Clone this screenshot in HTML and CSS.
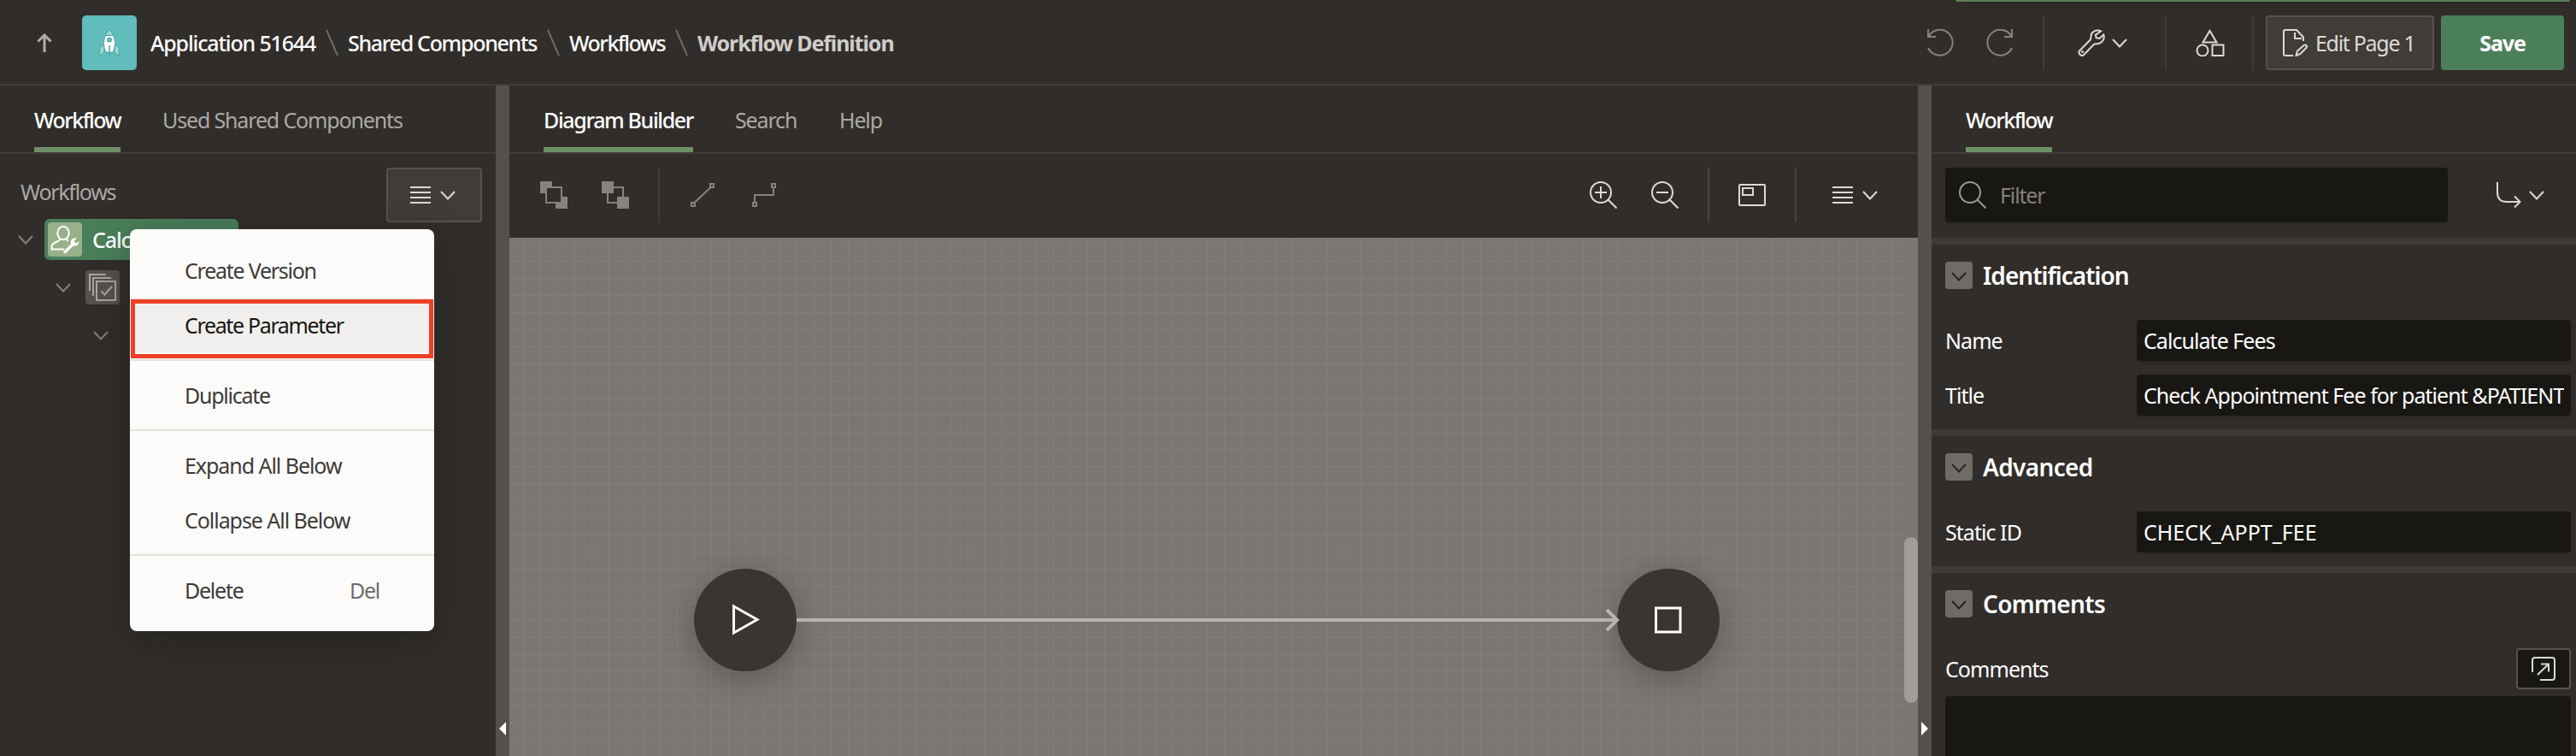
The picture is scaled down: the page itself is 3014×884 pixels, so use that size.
FILE: index.html
```
<!DOCTYPE html>
<html lang="en">
<head>
<meta charset="utf-8">
<title>Workflow Definition</title>
<link rel="stylesheet" href="styles.css">
</head>
<body>
<svg width="0" height="0" class="defs">
  <symbol id="chev" viewBox="0 0 18 11"><path d="M1 1l8 8.500l8-8.500" fill="none" stroke="currentColor" stroke-width="2"/></symbol>
  <symbol id="lines" viewBox="0 0 24 20"><path d="M0 1h24M0 7h24M0 13h24M0 19h24" stroke="currentColor" stroke-width="2"/></symbol>
</svg>
<div class="app">
  <header class="topbar">
    <svg class="up" width="18" height="22" viewBox="0 0 18 22"><path d="M9 22V2M1.500 9.500L9 2l7.500 7.500" fill="none" stroke="currentColor" stroke-width="3"/></svg>
    <span class="applogo"><svg width="24" height="32" viewBox="0 0 24 32"><path d="M5.500 18L.7 22.500v9L6 27zM18.500 18l4.800 4.500v9L18 27z" fill="#9fd6d3" stroke="#4aa3a4"/><path d="M7.500 7.500h9c2 5 3.200 12-.5 19.500H8c-3.700-7.500-2.500-14.500-.5-19.500z" fill="#fff" stroke="#4aa3a4" stroke-width=".8"/><path d="M12 .7c2.300 2 3.800 4.300 4.500 6.800h-9C8.200 5 9.700 2.700 12 .7z" fill="#9fd6d3" stroke="#4aa3a4"/><circle cx="12" cy="12.500" r="2.200" fill="#8fcfcd" stroke="#3f9597" stroke-width="1.300"/><path d="M12 19v12" stroke="#4aa3a4" stroke-width="1.500"/></svg></span>
    <nav class="crumbs">
      <a class="c1">Application 51644</a><svg class="slash" width="15" height="32"><path d="M1 1l13 30"/></svg>
      <a class="c2">Shared Components</a><svg class="slash" width="15" height="32"><path d="M1 1l13 30"/></svg>
      <a class="c3">Workflows</a><svg class="slash" width="15" height="32"><path d="M1 1l13 30"/></svg>
      <b class="c4">Workflow Definition</b>
    </nav>
    <div class="actions">
      <svg class="dim undo" width="32" height="32" viewBox="0 0 32 32"><path d="M2 0v9h9M2.500 8.500A15 15 0 1 1 2 22" /></svg>
      <svg class="dim redo" width="32" height="32" viewBox="0 0 32 32"><path d="M30 0v9h-9M29.500 8.500A15 15 0 1 0 30 22" /></svg>
      <i class="vr v1"></i>
      <svg class="lite" width="32" height="32" viewBox="0 0 32 32"><path d="M27 2.500C22 0 16 3 15.500 8c-.2 2 .2 3.500-1.200 5L2.500 25c-3 3 1.500 8 4.700 5L18.500 18.300c1.500-1.300 3-.8 5-1.100c5-.7 8.500-5.500 6.800-10.700L25.500 11l-3.800-.8L20.800 7z"/><circle cx="5.500" cy="26.500" r=".6"/></svg>
      <svg class="lite ch" width="18" height="11"><use href="#chev"/></svg>
      <i class="vr v2"></i>
      <svg class="lite" width="34" height="32" viewBox="0 0 34 32"><path d="M16.500 2l8 13.500h-16z"/><circle cx="8" cy="25" r="6.500"/><path d="M19.500 18.500h13v12.500h-13z"/></svg>
      <i class="vr v3"></i>
      <button class="btn edit"><svg class="lite" width="30" height="32" viewBox="0 0 30 32"><path d="M12 31H3q-2 0-2-2V3q0-2 2-2h13l8 8.500v4.500M14 4v7h8"/><path d="M15.500 31l1.500-5.500l7.500-6.500c2-1.500 4.500 .8 3 2.800l-7 7.200z"/></svg><span>Edit Page 1</span></button>
      <button class="btn save">Save</button>
    </div>
    <i class="notice"></i>
  </header>
  <main class="panes">
    <section class="left">
      <div class="tabs"><a class="on w">Workflow</a><a class="usc">Used Shared Components</a></div>
      <div class="treehead"><span>Workflows</span><button class="btn menu-b"><svg class="lite" width="24" height="20"><use href="#lines"/></svg><svg class="lite" width="18" height="11"><use href="#chev"/></svg></button></div>
      <ul class="tree">
        <li class="r1"><svg class="tc" width="18" height="11"><use href="#chev"/></svg><span class="node"><i class="ic"><svg width="40" height="40" viewBox="0 0 40 40"><ellipse cx="18" cy="12.500" rx="6.700" ry="7.700"/><path d="M14 19.500c-.5 4.500-9.500 2.500-9.500 9v3H19M22 19.500l1.500 2.500"/><path d="M20 34.500L30 25" stroke-width="3.500" stroke-linecap="round"/><path d="M33.500 18.500c-4-1-8 2.500-6.500 7c1.500 3.500 9 3 9.500-3l-3.500 2l-2.500-2z" fill="#fff" stroke="none"/></svg></i>Calculate Fees</span></li>
        <li class="r2"><svg class="tc" width="18" height="11"><use href="#chev"/></svg><i class="ic g"><svg width="40" height="40" viewBox="0 0 40 40"><path d="M13 13h22v22H13zM18.500 24.500l4 4L31 19M9 30V9h21M5 24V5h19"/></svg></i></li>
        <li class="r3"><svg class="tc" width="18" height="11"><use href="#chev"/></svg></li>
      </ul>
      <div class="popup">
        <a>Create Version</a><a class="hot">Create Parameter</a><hr><a>Duplicate</a><hr><a class="wide">Expand All Below</a><a class="wide">Collapse All Below</a><hr><a>Delete<kbd>Del</kbd></a>
        <i class="mark"></i>
      </div>
    </section>
    <div class="split s1"><svg width="8" height="16"><path d="M8 0v16L0 8z" fill="#fff"/></svg></div>
    <section class="center">
      <div class="tabs"><a class="on db">Diagram Builder</a><a class="se">Search</a><a class="he">Help</a></div>
      <div class="toolbar">
        <svg class="t1" width="32" height="32"><path d="M0 0h14v14H0zM18 18h14v14H18z" fill="#858280"/><path d="M7 7h18v18H7z" fill="#312d2a" stroke="#858280" stroke-width="2"/></svg>
        <svg class="t2" width="32" height="32"><path d="M7 7h18v18H7z" fill="none" stroke="#858280" stroke-width="2"/><path d="M0 0h14v14H0zM18 18h14v14H18z" fill="#858280"/></svg>
        <i class="vr f1"></i>
        <svg class="dim t3" width="28" height="28"><path d="M1 23h4v4H1zM23 1h4v4h-4zM4.500 23L23.500 5"/></svg>
        <svg class="dim t4" width="28" height="28"><path d="M1 23h4v4H1zM23 1h4v4h-4zM3 23V14H25V5"/></svg>
        <svg class="lite z1" width="32" height="32"><circle cx="13" cy="13" r="12"/><path d="M21.500 21.500L31.500 31.500M6 13h14M13 6v14"/></svg>
        <svg class="lite z2" width="32" height="32"><circle cx="13" cy="13" r="12"/><path d="M21.500 21.500L31.500 31.500M6 13h14"/></svg>
        <i class="vr f2"></i>
        <svg class="lite z3" width="32" height="26"><rect x="1" y="1" width="30" height="24" rx="1"/><path d="M5 5h12v8H5z"/></svg>
        <i class="vr f3"></i>
        <svg class="lite z4" width="24" height="20"><use href="#lines"/></svg><svg class="lite z5" width="18" height="11"><use href="#chev"/></svg>
      </div>
      <div class="canvas">
        <div class="grid"></div>
        <svg class="edge" width="970" height="30"><path d="M0 15h960" stroke-width="4"/><path d="M948 3l12 12l-12 12" stroke-width="4"/></svg>
        <div class="circle start"><svg width="34" height="38"><path d="M3.500 3L31 18.500L3.500 34z"/></svg></div>
        <div class="circle stop"><svg width="34" height="34"><path d="M2.500 3h28.500v28h-28.500z"/></svg></div>
        <i class="thumb"></i>
      </div>
    </section>
    <div class="split s2"><svg width="8" height="16"><path d="M0 0v16L8 8z" fill="#fff"/></svg></div>
    <section class="right">
      <div class="tabs"><a class="on w">Workflow</a></div>
      <div class="filterbar"><div class="filter"><svg width="32" height="32"><circle cx="13" cy="13" r="12"/><path d="M21.500 21.500L31.500 31.500"/></svg><span>Filter</span></div><svg class="lite go" width="30" height="30"><path d="M1 0v12c0 7 4 11 11 11h15M21 16.500l6.500 6.500l-6.500 6.500"/></svg><svg class="lite" width="18" height="11"><use href="#chev"/></svg></div>
      <div class="group"><h3><i><svg width="18" height="11"><use href="#chev"/></svg></i><span class="h1">Identification</span></h3>
        <div class="field"><label>Name</label><div class="in"><span>Calculate Fees</span></div></div>
        <div class="field"><label>Title</label><div class="in"><span>Check Appointment Fee for patient &amp;PATIENT</span></div></div></div>
      <div class="group"><h3><i><svg width="18" height="11"><use href="#chev"/></svg></i><span>Advanced</span></h3>
        <div class="field"><label>Static ID</label><div class="in"><span class="caps">CHECK_APPT_FEE</span></div></div></div>
      <div class="group"><h3><i><svg width="18" height="11"><use href="#chev"/></svg></i><span>Comments</span></h3>
        <div class="field"><label>Comments</label><button class="ex"><svg class="lite" width="28" height="28"><path d="M1 18V4q0-3 3-3h20q3 0 3 3v20q0 3-3 3H10M7 21L20 8.500M11 8.500h9v9"/></svg></button></div>
        <div class="area"></div></div>
    </section>
  </main>
</div>
</body>
</html>
```
FILE: styles.css
```
* { box-sizing: border-box; }
body { margin: 0; background: #312d2a; color: #fff; font: 25px/32px "Noto Sans", "Open Sans", sans-serif; letter-spacing: -1.15px; overflow: hidden; }
svg { display: block; flex: none; }
.defs { position: absolute; }
i { font-style: normal; display: block; }
button { font: inherit; letter-spacing: inherit; color: inherit; padding: 0; border: 0; }
a, span, b, label { white-space: nowrap; }
.app { width: 3014px; height: 884px; display: flex; flex-direction: column; overflow: hidden; }
.dim, .lite { fill: none; stroke: currentColor; stroke-width: 2; }
.dim { color: #858280; }
.lite { color: #dcdad7; }
.topbar { position: relative; flex: none; height: 100px; border-bottom: 2px solid #403c38; display: flex; padding: 18px 14px 16px 43px; align-items: center; }
.up { color: #b0aeab; }
.applogo { width: 64px; height: 64px; margin-left: 35px; border-radius: 5px; background: #61bcbc; display: flex; align-items: center; justify-content: center; }
.crumbs { display: flex; align-items: center; margin-left: 16px; font-weight: 500; letter-spacing: -1.3px; }
.c1 { width: 205px; letter-spacing: -1.15px; } .c2 { width: 233px; } .c3 { width: 124px; letter-spacing: -1.5px; }
.crumbs b { color: #cfcdcb; letter-spacing: -1.1px; }
.slash { margin-right: 11px; fill: none; stroke: #6f6b67; stroke-width: 2; }
.actions { display: flex; align-items: center; margin-left: auto; }
.redo { margin-left: 38px; }
.vr { width: 2px; height: 64px; background: #403c38; flex: none; }
.v1 { margin: 0 39px 0 34px; }
.ch { margin-left: 8px; }
.v2 { margin: 0 34px 0 44px; }
.v3 { margin: 0 14px 0 32px; }
.btn { display: flex; align-items: center; border-radius: 4px; background: #403c38; border: 2px solid #57524d; }
.edit { width: 197px; height: 64px; color: #dcdad7; padding-left: 18px; gap: 8px; letter-spacing: -1.3px; }
.save { width: 144px; height: 64px; margin-left: 8px; background: #4b7f5a; border: 0; justify-content: center; font-weight: 700; }
.notice { position: absolute; left: 2288px; top: 0; width: 719px; height: 2px; background: #5c8056; border-radius: 0 0 4px 4px; box-shadow: 0 2px 8px rgba(0,0,0,.35); }
.panes { flex: 1; min-height: 0; display: flex; }
.left { width: 580px; position: relative; }
.center { flex: 1; display: flex; flex-direction: column; }
.right { width: 754px; }
.split { width: 16px; background: #55504b; padding: 744px 4px 0; }
.tabs { height: 80px; border-bottom: 2px solid #403c38; display: flex; gap: 49px; padding-left: 40px; color: #aba9a6; }
.tabs a { height: 78px; padding-top: 24px; }
.tabs .on { color: #fff; font-weight: 500; letter-spacing: -1.35px; border-bottom: 6px solid #6f8f67; }
.tabs .w { width: 101px; letter-spacing: -1.55px; }
.db { width: 175px; }
.se { width: 73px; }
.treehead { display: flex; justify-content: space-between; padding: 16px 16px 0 24px; color: #aba9a6; }
.treehead span { padding-top: 12px; letter-spacing: -1.3px; }
.menu-b { width: 112px; height: 64px; padding-left: 26px; gap: 11px; }
.tree { list-style: none; margin: -8px 0 0; padding: 0; position: relative; }
.tree li { height: 56px; display: flex; align-items: center; }
.r1 { padding-left: 21px; gap: 13px; }
.r2 { padding-left: 65px; gap: 17px; }
.r3 { padding-left: 109px; }
.tc { color: #85817d; }
.node { width: 227px; height: 48px; background: #4b7f5a; border-radius: 6px; display: flex; align-items: center; padding-left: 4px; gap: 12px; font-weight: 500; }
.ic { width: 40px; height: 40px; border-radius: 4px; background: #97b18b; }
.ic svg { fill: none; stroke: #fff; stroke-width: 2; }
.ic.g { background: #57524d; }
.ic.g svg { stroke: #a9a6a2; }
.popup { position: absolute; left: 152px; top: 168px; width: 356px; height: 470px; padding: 16px 0; background: #fcfbfa; border-radius: 8px; color: #3d3a38; box-shadow: 0 12px 48px rgba(20,25,20,.4); letter-spacing: -1.25px; }
.popup a { display: flex; justify-content: space-between; height: 64px; padding: 16px 64px; }
.popup .wide { letter-spacing: -1.05px; }
.popup hr { margin: 8px 0; border: 0; height: 2px; background: #e4e1dd; }
.popup kbd { font: inherit; color: #6f6c6a; }
.popup .hot { background: #f1efed; color: #161513; letter-spacing: -1.35px; }
.mark { position: absolute; left: 1px; top: 82px; width: 354px; height: 69px; border: 5px solid #ec4027; }
.toolbar { height: 98px; padding: 0 47px 2px 36px; display: flex; align-items: center; }
.t2 { margin-left: 40px; }
.f1 { margin: 0 36px 0 34px; }
.t4 { margin-left: 44px; }
.z1 { margin-left: auto; }
.z2 { margin-left: 40px; }
.f2, .f3 { background: #484440; }
.f2 { margin: 0 34px; }
.f3 { margin: 0 42px 0 34px; }
.z5 { margin-left: 11px; }
.canvas { flex: 1; position: relative; background: #7a7671; overflow: hidden; }
.grid { width: 1632px; height: 100%; background-image: linear-gradient(90deg, #827e79 1px, transparent 1px), linear-gradient(#827e79 1px, transparent 1px); background-size: 20px 20px; background-position: 16px 7px; }
.edge { position: absolute; left: 336px; top: 432px; fill: none; stroke: #b8b3ae; z-index: 1; }
.circle { position: absolute; top: 387px; width: 120px; height: 120px; border-radius: 50%; background: #393530; display: flex; align-items: center; justify-content: center; box-shadow: 0 8px 32px rgba(50,46,44,.4); }
.circle svg { fill: none; stroke: #fff; stroke-width: 3; }
.start { left: 216px; }
.stop { left: 1296px; }
.thumb { position: absolute; right: 0; top: 350px; width: 16px; height: 194px; border-radius: 8px; background: #a19d9a; }
.filterbar { height: 98px; display: flex; align-items: center; padding: 0 37px 2px 16px; }
.filter { width: 588px; height: 64px; border-radius: 4px; background: #191714; color: #85817d; display: flex; align-items: center; gap: 16px; padding-left: 16px; box-shadow: 0 2px 3px rgba(0,0,0,.15); }
.filter svg { fill: none; stroke: #9a9794; stroke-width: 2; }
.go { margin: 0 8px 0 57px; }
.group { border-top: 8px solid #3f3a37; padding: 20px 6px 16px 16px; }
h3 { margin: 0 0 36px; height: 32px; display: flex; align-items: center; gap: 12px; font-size: 28px; font-weight: 600; letter-spacing: -0.65px; }
.h1 { letter-spacing: -1px; }
h3 i { width: 32px; height: 32px; border-radius: 4px; background: #6f6b66; color: #262320; display: flex; align-items: center; justify-content: center; padding-top: 2px; }
.field { display: flex; justify-content: space-between; align-items: center; height: 48px; letter-spacing: -0.95px; }
.field + .field { margin-top: 16px; }
.in { width: 508px; height: 48px; border-radius: 4px; background: #191714; padding: 8px; box-shadow: 0 2px 3px rgba(0,0,0,.15); }
.in span { display: block; overflow: hidden; }
.in .caps { letter-spacing: 0; }
.ex { width: 64px; height: 48px; border: 2px solid #57524d; border-radius: 4px; background: #191714; display: flex; align-items: center; justify-content: center; }
.area { margin-top: 8px; height: 90px; border-radius: 4px; background: #191714; }
```
